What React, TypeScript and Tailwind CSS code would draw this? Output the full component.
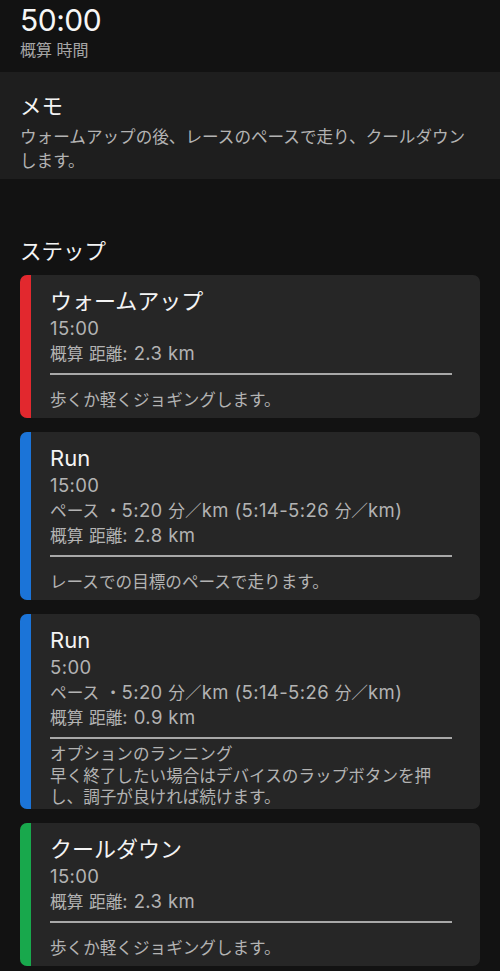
const FONT = "font-['Inter','Noto_Sans_CJK_JP',sans-serif]";

type Step = {
  title: string;
  color: string;
  lines: string[];
  note: string[];
  multi?: boolean;
};

const STEPS: Step[] = [
  {
    title: "ウォームアップ",
    color: "bg-[#e2282e]",
    lines: ["15:00", "概算 距離: 2.3 km"],
    note: ["歩くか軽くジョギングします。"],
  },
  {
    title: "Run",
    color: "bg-[#1b74d8]",
    lines: ["15:00", "ペース ・5:20 分／km (5:14-5:26 分／km)", "概算 距離: 2.8 km"],
    note: ["レースでの目標のペースで走ります。"],
  },
  {
    title: "Run",
    color: "bg-[#1b74d8]",
    lines: ["5:00", "ペース ・5:20 分／km (5:14-5:26 分／km)", "概算 距離: 0.9 km"],
    note: ["オプションのランニング", "早く終了したい場合はデバイスのラップボタンを押し、調子が良ければ続けます。"],
    multi: true,
  },
  {
    title: "クールダウン",
    color: "bg-[#18a84c]",
    lines: ["15:00", "概算 距離: 2.3 km"],
    note: ["歩くか軽くジョギングします。"],
  },
];

// latin runs render a bit larger than the kana/kanji, like the iOS system font does
function Mixed({ text }: { text: string }) {
  const parts = text.split(/([\u0020-\u007e]+)/).filter((p) => p !== "");
  return (
    <>
      {parts.map((p, i) =>
        /^[\u0020-\u007e]+$/.test(p) ? (
          <span key={i} className="text-[18.5px] leading-none tracking-[0.4px]">
            {p}
          </span>
        ) : (
          <span key={i}>{p}</span>
        ),
      )}
    </>
  );
}

function StepCard({ step }: { step: Step }) {
  return (
    <div className="flex overflow-hidden rounded-[7px] bg-[#262626]">
      <div className={`w-[11px] shrink-0 ${step.color}`} />
      <div className="flex-1 pl-[19px] pr-[28px] pt-[10px]">
        <p className="text-[22px] leading-[32px] text-[#f4f4f4]">{step.title}</p>
        {step.lines.map((line, i) => (
          <p key={i} className="h-[25px] whitespace-nowrap text-[16.7px] leading-[25px] text-[#b3b3b3]">
            <Mixed text={line} />
          </p>
        ))}
        <div className="mt-[6px] h-[2px] bg-[#a8a8a8]" />
        {step.multi ? (
          <div className="pr-2 pt-[5px] text-[16.6px] leading-[21.5px] text-[#b3b3b3]">
            {step.note.map((n, i) => (
              <p key={i}>{n}</p>
            ))}
          </div>
        ) : (
          <p className="pb-[5px] pt-[13px] text-[16.6px] leading-[25px] text-[#b3b3b3]">{step.note[0]}</p>
        )}
      </div>
    </div>
  );
}

export default function App() {
  return (
    <div className={`min-h-[971px] w-[500px] bg-[#121212] pb-2 ${FONT}`}>
      <header className="px-5 pb-[12px]">
        <p className="text-[30px] leading-[40px] tracking-[-0.5px] text-[#f6f6f6]">50:00</p>
        <p className="text-[16px] leading-[20px] text-[#a6a6a6]">概算 時間</p>
      </header>

      <section className="bg-[#1e1e1e] px-5 pb-[6px] pt-[19px]">
        <h2 className="text-[21.5px] leading-[30px] text-[#f4f4f4]">メモ</h2>
        <p className="mt-[4px] text-[16.6px] leading-[24px] text-[#b3b3b3]">
          ウォームアップの後、レースのペースで走り、クールダウンします。
        </p>
      </section>

      <section className="px-5 pt-[57px]">
        <h2 className="mb-[9px] text-[21.5px] leading-[30px] text-[#f4f4f4]">ステップ</h2>
        <div className="flex flex-col gap-[14px]">
          {STEPS.map((step, i) => (
            <StepCard key={i} step={step} />
          ))}
        </div>
      </section>
    </div>
  );
}
